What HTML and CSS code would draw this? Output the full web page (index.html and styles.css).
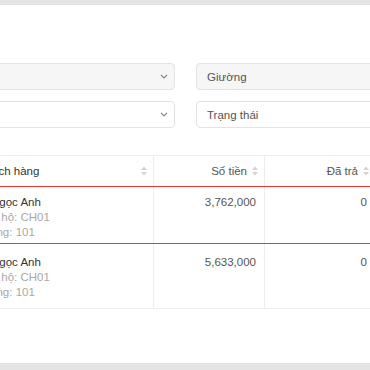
FILE: index.html
```html
<!DOCTYPE html>
<html lang="vi">
<head>
  <meta charset="UTF-8">
  <title>Công nợ</title>
  <link rel="stylesheet" href="styles.css">
</head>
<body>
  <div class="card">
    <div class="content">
      <div class="filters">
        <div class="field disabled">
          <span class="field-text">Chọn căn hộ</span>
          <svg class="chevron" width="8" height="5" viewBox="0 0 8 5"><polyline points="1,1 4,4 7,1" fill="none" stroke="#8a8a8a" stroke-width="1.2"/></svg>
        </div>
        <div class="field disabled">
          <span class="field-text">Giường</span>
        </div>
        <div class="field">
          <span class="field-text">Chọn phòng</span>
          <svg class="chevron" width="8" height="5" viewBox="0 0 8 5"><polyline points="1,1 4,4 7,1" fill="none" stroke="#8a8a8a" stroke-width="1.2"/></svg>
        </div>
        <div class="field">
          <span class="field-text">Trạng thái</span>
        </div>
      </div>

      <div class="table">
        <div class="row head">
          <div class="cell">
            <span>Khách hàng</span>
            <svg class="sort" width="8" height="12" viewBox="0 0 8 12"><path d="M1 5 L4 1.5 L7 5 Z M1 7 L4 10.5 L7 7 Z" fill="#d4d4d4"/></svg>
          </div>
          <div class="cell num">
            <span>Số tiền</span>
            <svg class="sort" width="8" height="12" viewBox="0 0 8 12"><path d="M1 5 L4 1.5 L7 5 Z M1 7 L4 10.5 L7 7 Z" fill="#d4d4d4"/></svg>
          </div>
          <div class="cell num">
            <span>Đã trả</span>
            <svg class="sort" width="8" height="12" viewBox="0 0 8 12"><path d="M1 5 L4 1.5 L7 5 Z M1 7 L4 10.5 L7 7 Z" fill="#d4d4d4"/></svg>
          </div>
        </div>

        <div class="row selected">
          <div class="cell">
            <div class="name">Lê Ngọc Anh</div>
            <div class="sub">Căn hộ: CH01</div>
            <div class="sub">Phòng: 101</div>
          </div>
          <div class="cell num">3,762,000</div>
          <div class="cell num">0</div>
        </div>

        <div class="row">
          <div class="cell">
            <div class="name">Lê Ngọc Anh</div>
            <div class="sub">Căn hộ: CH01</div>
            <div class="sub">Phòng: 101</div>
          </div>
          <div class="cell num">5,633,000</div>
          <div class="cell num">0</div>
        </div>
      </div>
    </div>
  </div>
</body>
</html>
```

FILE: styles.css
```css
html, body {
  margin: 0;
  overflow: hidden;
}

body {
  background: #e4e4e4;
  font-family: "Liberation Sans", Arial, sans-serif;
  font-size: 11.5px;
  color: #333;
}

.card {
  margin-top: 5px;
  height: 358px;
  background: #fff;
  box-shadow: 0 1px 2px rgba(0, 0, 0, 0.08);
  padding-top: 58px;
  box-sizing: border-box;
}

.content {
  margin-left: -33px;
  width: 450px;
}

.filters {
  display: grid;
  grid-template-columns: 208px 1fr;
  column-gap: 21px;
  row-gap: 11px;
}

.field {
  height: 27px;
  box-sizing: border-box;
  border: 1px solid #e3e3e3;
  border-radius: 4px;
  background: #fff;
  display: flex;
  align-items: center;
  justify-content: space-between;
  padding: 0 6px 0 10px;
  color: #555;
}

.field.disabled {
  background: #f6f6f6;
}

.field-text {
  white-space: nowrap;
}

.filters .field:nth-child(odd) .field-text {
  color: transparent;
}

.table {
  margin-top: 27px;
  border-top: 1px solid #ededed;
}

.row {
  display: grid;
  grid-template-columns: 187px 111px 111px;
  border-bottom: 1px solid #ededed;
}

.cell {
  border-right: 1px solid #ededed;
  padding: 11px 8px 8px 8px;
  line-height: 15px;
}

.head {
  border-bottom: none;
}

.head .cell {
  height: 30px;
  box-sizing: border-box;
  padding: 0 5px 0 11px;
  display: flex;
  align-items: center;
  justify-content: space-between;
  color: #333;
  white-space: nowrap;
}

.head .cell.num {
  justify-content: flex-end;
  gap: 4px;
  color: #555;
}

.selected {
  border-top: 1px solid #f23a2a;
  border-bottom: 1px solid #f23a2a;
}

.selected .cell {
  padding-top: 8px;
  padding-bottom: 3px;
}

.num {
  text-align: right;
  color: #555;
}

.name {
  color: #333;
  white-space: nowrap;
}

.sub {
  color: #a8a8a8;
  white-space: nowrap;
}

.name + .sub {
  margin-left: 2px;
}

.sub + .sub {
  margin-left: 1px;
}
```
